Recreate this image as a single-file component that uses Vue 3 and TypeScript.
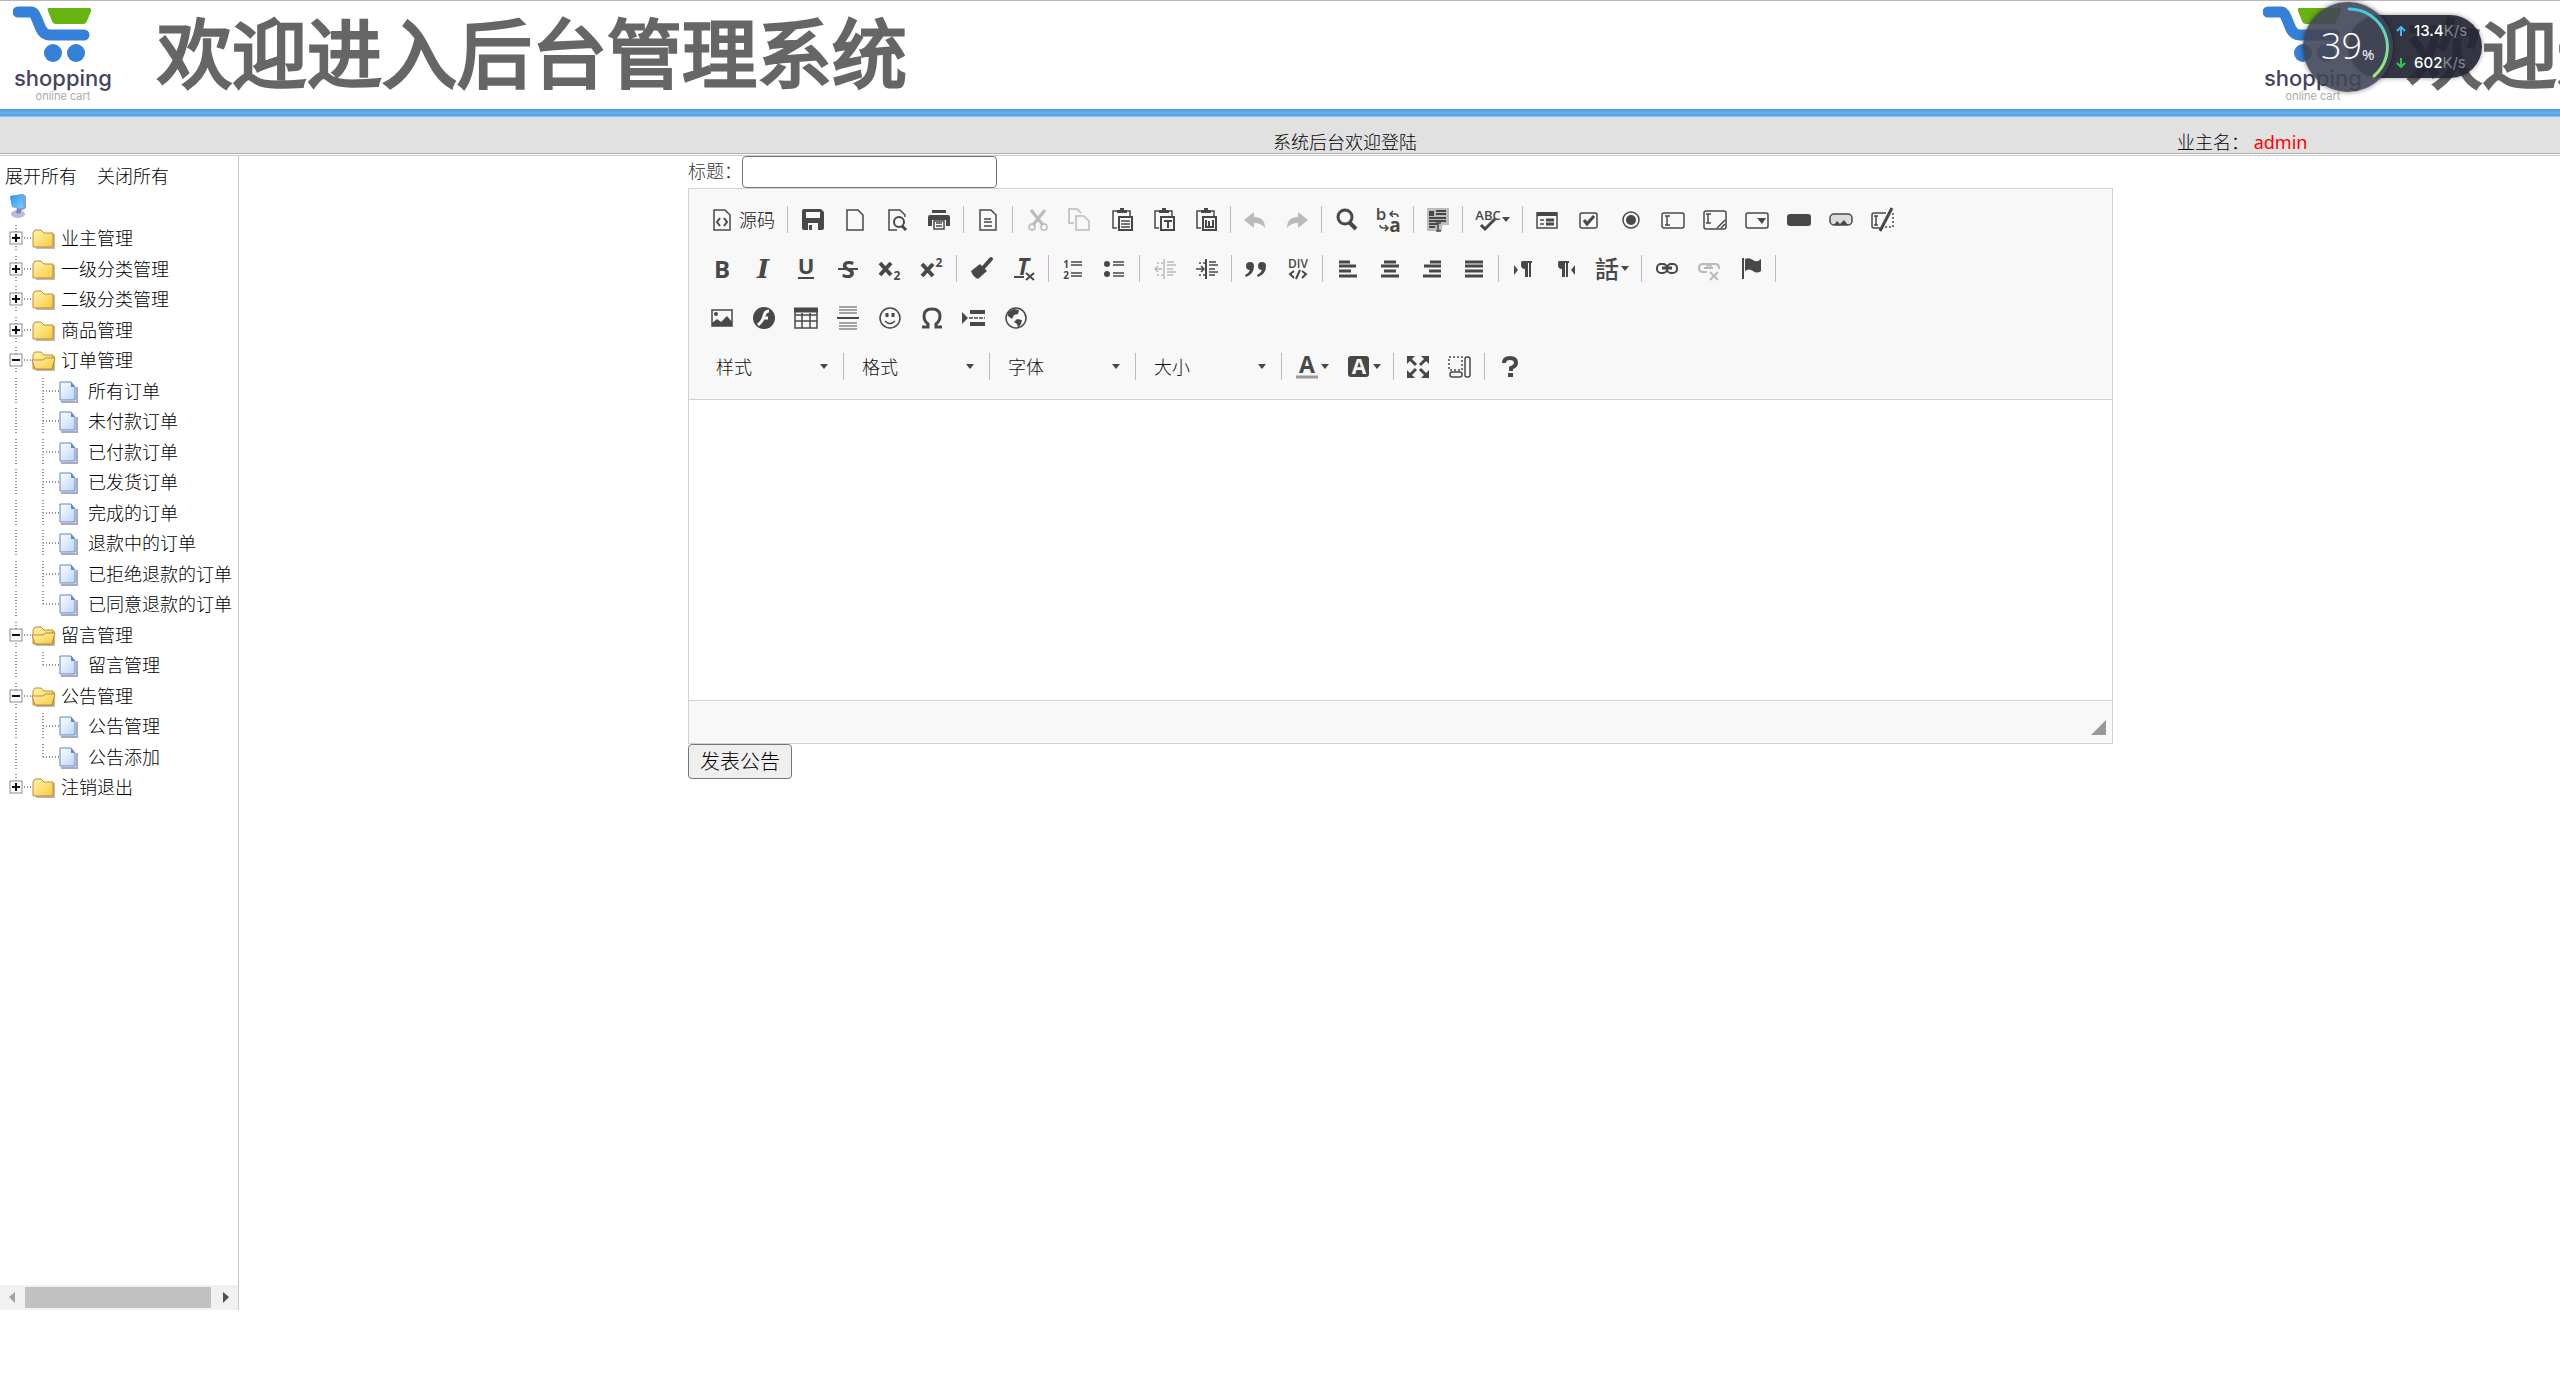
<script setup lang="ts">
import { ref } from 'vue'

interface Tool { id: string; label: string; text?: string; off?: boolean; menu?: boolean }
interface Row { kind: 'closed' | 'open' | 'leaf' | 'last'; label: string }

const t = (id: string, label: string, extra: Partial<Tool> = {}): Tool => ({ id, label, ...extra })

const toolbar: Tool[][][] = [
  [
    [t('source', '源码', { text: '源码' })],
    [t('save', '保存'), t('page', '新建'), t('preview', '预览'), t('print', '打印')],
    [t('template', '模板')],
    [t('cut', '剪切', { off: true }), t('copy', '复制', { off: true }), t('paste', '粘贴'), t('pasteText', '粘贴为无格式文本'), t('pasteWord', '从 Word 粘贴')],
    [t('undo', '撤消', { off: true }), t('redo', '重做', { off: true })],
    [t('find', '查找'), t('replace', '替换')],
    [t('selectAll', '全选')],
    [t('spell', '拼写检查', { menu: true })],
    [t('form', '表单'), t('checkbox', '复选框'), t('radio', '单选按钮'), t('textfield', '单行文本'), t('textarea', '多行文本'), t('select', '列表/菜单'), t('button', '按钮'), t('imageButton', '图像按钮'), t('hidden', '隐藏域')],
  ],
  [
    [t('bold', '加粗'), t('italic', '倾斜'), t('underline', '下划线'), t('strike', '删除线'), t('sub', '下标'), t('sup', '上标')],
    [t('brush', '复制格式'), t('removeFormat', '清除格式')],
    [t('numbered', '编号列表'), t('bulleted', '项目列表')],
    [t('outdent', '减少缩进量', { off: true }), t('indent', '增加缩进量')],
    [t('quote', '块引用'), t('div', '创建 DIV 容器')],
    [t('left', '左对齐'), t('center', '居中'), t('right', '右对齐'), t('justify', '两端对齐')],
    [t('ltr', '文字方向从左到右'), t('rtl', '文字方向从右到左'), t('language', '设置语言', { menu: true })],
    [t('link', '插入链接'), t('unlink', '取消链接', { off: true }), t('anchor', '插入锚点')],
  ],
  [
    [t('image', '图像'), t('flash', 'Flash'), t('table', '表格'), t('rule', '水平线'), t('smiley', '表情符'), t('omega', '特殊符号'), t('pageBreak', '分页符'), t('globe', 'IFrame')],
  ],
]

const combos = ['样式', '格式', '字体', '大小']
const lastGroups: Tool[][] = [
  [t('textColor', '文本颜色', { menu: true }), t('bgColor', '背景颜色', { menu: true })],
  [t('maximize', '全屏'), t('blocks', '显示区块')],
  [t('help', '关于')],
]

const doc = '<path d="M4 2H15L20 7V22H4Z"/>'
const clip = '<path d="M7 3H3V20H7M17 3h3v5"/><path d="M7 2h10v3H7zM10 0h4v3h-4z" fill="currentColor" stroke="none"/><path d="M9 9h13v13H9z" stroke-width="2"/>'
const txt = (x: number, y: number, size: number, s: string, more = '') =>
  `<text x="${x}" y="${y}" font-size="${size}" text-anchor="middle" font-family="Open Sans, sans-serif" font-weight="700" fill="currentColor" stroke="none" ${more}>${s}</text>`
const solid = (d: string) => `<path d="${d}" fill="currentColor" stroke="none"/>`

const icons: Record<string, string> = {
  source: doc + '<path d="M10 10l-3 4 3 4M14 10l3 4-3 4" stroke-width="2"/>',
  save: solid('M3 1H20L23 4V20Q23 22 21 22H3Q1 22 1 20V3Q1 1 3 1ZM5 4V10H19V4ZM7 15V22H17V15Z').replace('<path', '<path fill-rule="evenodd"') + solid('M8 17h3v5H8z'),
  page: doc,
  preview: '<path d="M12 22H4V2H15L20 7V9"/><circle cx="14" cy="14" r="5" stroke-width="2"/><path d="M17 18l4 4" stroke-width="3"/>',
  print: solid('M5 2h14v3H5zM3 7h18q2 0 2 2v9h-4v-6H5v6H1V9q0-2 2-2z') + '<path d="M7 13h10v8H7zM9 15h6M9 18h6"/>',
  template: doc + '<path d="M8 11h7M8 14h8M8 18h8"/>',
  cut: '<path d="M5 2L17 17M19 2L7 17" stroke-width="3"/><circle cx="6" cy="19" r="3"/><circle cx="18" cy="19" r="3"/>',
  copy: '<path d="M6 15H1V1H9L13 5"/><path d="M8 8H16L21 13V22H8Z"/>',
  paste: clip + '<path d="M11 13h9M11 16h9M11 19h9"/>',
  pasteText: clip + '<path d="M12 13h8M16 13v7" stroke-width="2"/>',
  pasteWord: clip + '<path d="M12 12v7h7v-7M15 13v6" stroke-width="2"/>',
  undo: solid('M1 12L11 4V9Q22 9 22 20Q18 15 11 15V20Z'),
  redo: solid('M23 12L13 4V9Q2 9 2 20Q6 15 13 15V20Z'),
  find: '<circle cx="10" cy="9" r="7" stroke-width="3"/><path d="M14 14l7 7" stroke-width="4"/>',
  replace: txt(4, 12, 17, 'b', 'style="font-weight:600"') + txt(18, 24, 19, 'a') + '<path d="M13 6h5q3 0 3 3M16 3l-3 3 3 3M3 17q0 3 3 3h4M8 17l3 3-3 3"/>',
  selectAll: '<path d="M1 0h22v17h-7v6H1z" fill="#bcbcbc" stroke="none"/><path d="M10 3h10M10 6h10M3 10h17M3 13h17M3 16h8M3 19h6" stroke-width="2"/>' + solid('M3 3h5v5H3z') + '<path d="M10 15h5M12 15v8M10 23h5"/>',
  spell: txt(12, 12, 13, 'ABC', 'style="font-weight:600"') + '<path d="M5 17l4 4L19 11" stroke-width="3"/>',
  form: '<path d="M2 5h20v15H2z"/><path d="M2 6h20" stroke-width="4"/><path d="M5 12h4M5 16h4"/><path d="M11 12h8M11 16h8" stroke-width="3"/>',
  checkbox: '<rect x="3" y="5" width="17" height="15" rx="2"/><path d="M7 12l3 4 7-8" stroke-width="3"/>',
  radio: '<circle cx="12" cy="12" r="8"/><circle cx="12" cy="12" r="5" fill="currentColor" stroke="none"/>',
  textfield: '<rect x="1" y="5" width="22" height="15" rx="2"/><path d="M4 8h5M6 8v9M4 17h5"/>',
  textarea: '<rect x="1" y="3" width="22" height="18" rx="2"/><path d="M3 6h5M5 6v9M3 15h5M14 20l8-8M18 20l4-4"/>',
  select: '<rect x="1" y="5" width="22" height="15" rx="2"/>' + solid('M12 10h9l-4 6z'),
  button: '<rect x="0" y="6" width="24" height="12" rx="3" fill="currentColor" stroke="none"/>',
  imageButton: '<rect x="1" y="6" width="22" height="11" rx="4" fill="#dcdcdc"/>' + solid('M5 17l3-4 3 3 4-4 4 5z'),
  hidden: '<path d="M12 20H3Q1 20 1 18V7Q1 5 3 5H15M3 8h4M5 8v9M3 17h4"/><path d="M9 23L21 0" stroke-width="3"/><path d="M22 5v14H14" stroke-dasharray="2 2"/>',
  bold: txt(12, 21, 24, 'B'),
  italic: '<text x="11" y="21" font-size="26" text-anchor="middle" font-family="DejaVu Serif" font-style="italic" font-weight="700" fill="currentColor" stroke="none">I</text>',
  underline: txt(12, 17, 22, 'U') + '<path d="M4 21h16" stroke-width="2"/>',
  strike: txt(12, 21, 24, 'S') + '<path d="M2 12h20" stroke-width="2"/>',
  sub: '<path d="M2 6l11 12M13 6L2 18" stroke-width="4"/>' + txt(19, 23, 12, '2'),
  sup: '<path d="M2 7l11 12M13 7L2 19" stroke-width="4"/>' + txt(19, 10, 12, '2'),
  brush: solid('M1 14l9-7 7 7-9 8q-5-2-7-8z') + '<path d="M13 11L21 2" stroke-width="4" stroke-linecap="round"/>',
  removeFormat: txt(11, 18, 23, 'T', 'font-style="italic"') + '<path d="M2 20h10" stroke-width="2"/><path d="M14 16l8 7M22 16l-8 7" stroke-width="2"/>',
  numbered: txt(5, 11, 10, '1') + txt(5, 22, 10, '2') + '<path d="M10 5h11M10 8h11M10 16h11M10 19h11"/>',
  bulleted: '<circle cx="4" cy="7" r="3" fill="currentColor" stroke="none"/><circle cx="4" cy="17" r="3" fill="currentColor" stroke="none"/><path d="M10 5h11M10 8h11M10 16h11M10 19h11"/>',
  outdent: '<path d="M11 2v20M14 5h7M14 8h9M14 12h6M14 15h9M14 18h6M2 12h7M5 9l-3 3 3 3"/><path d="M4 6h6M4 18h6" stroke-dasharray="2 2"/>',
  indent: '<path d="M11 2v20" stroke-width="2"/><path d="M14 5h7M14 8h9M14 12h6M14 15h9M14 18h6M1 12h7M6 9l3 3-3 3"/><path d="M4 6h6M4 18h6" stroke-dasharray="2 2"/>',
  quote: solid('M6 5a4 4 0 0 1 4 4q0 8-8 11l-1-2q4-2 5-5a4 4 0 0 1 0-8zM18 5a4 4 0 0 1 4 4q0 8-8 11l-1-2q4-2 5-5a4 4 0 0 1 0-8z'),
  div: txt(12, 11, 12, 'DIV', 'style="font-weight:600"') + '<path d="M8 14l-4 3 4 4M16 14l4 3-4 4M14 13l-4 9" stroke-width="2"/>',
  left: '<path d="M3 5h11M3 9h17M3 14h12M3 19h18" stroke-width="3"/>',
  center: '<path d="M6 5h12M3 9h18M6 14h12M3 19h18" stroke-width="3"/>',
  right: '<path d="M10 5h11M4 9h17M9 14h12M3 19h18" stroke-width="3"/>',
  justify: '<path d="M3 5h18M3 9h18M3 14h18M3 19h18" stroke-width="3"/>',
  ltr: solid('M3 8l4 5-4 5zM11 4h10v2h-1v14h-2V6h-1v14h-3v-8q-4 0-4-4t1-4z'),
  rtl: solid('M22 8l-4 5 4 5zM6 4h10v2h-1v14h-2V6h-1v14H9v-8q-4 0-4-4t1-4z'),
  language: '<text x="12" y="21" font-size="24" text-anchor="middle" font-family="Noto Sans CJK TC, sans-serif" font-weight="500" fill="currentColor" stroke="none">話</text>',
  link: '<rect x="2" y="7" width="10" height="9" rx="4" stroke-width="2"/><rect x="12" y="7" width="10" height="9" rx="4" stroke-width="2"/><path d="M7 11h10" stroke-width="3"/>',
  unlink: '<path d="M10 15H6Q2 15 2 11T6 7H10Q14 7 14 11M10 11Q10 7 14 7H18Q22 7 22 11V12M7 11h9" stroke-width="2"/><path d="M13 15l8 8M21 15l-8 8" stroke-width="2"/>',
  anchor: '<path d="M4 1v21" stroke-width="2"/>' + solid('M6 2Q10 0 14 3T22 2V14Q18 17 14 14T6 14Z'),
  image: '<path d="M2 4h20v16H2z"/><circle cx="6" cy="8" r="2" fill="currentColor" stroke="none"/>' + solid('M2 20v-3l5-4 4 3 6-6 5 6v4z'),
  flash: '<circle cx="12" cy="12" r="11" fill="currentColor" stroke="none"/><path d="M17 5q-4 0-5 5t-6 9M11 12h5" stroke="#f8f8f8" stroke-width="3"/>',
  table: '<path d="M1 3h22v19H1zM1 9h22M1 15h22M8 7v15M16 7v15"/><path d="M0 4h24" stroke-width="5"/>',
  rule: '<path d="M3 1h18M3 4h18M3 7h18M3 17h18M3 20h18M3 23h18" stroke="#888"/><path d="M1 12h22" stroke-width="2"/>',
  smiley: '<circle cx="12" cy="12" r="10"/><path d="M9 7v4M15 7v4" stroke-width="3"/><path d="M7 15q5 5 10 0"/>',
  omega: '<path d="M2 21h6v-3Q4 15 4 10Q4 3 12 3T20 10Q20 15 16 18v3h6" stroke-width="3"/>',
  pageBreak: solid('M0 6l6 6-6 6z') + '<path d="M8 6h15M8 18h15" stroke-width="4"/><path d="M7 12h16" stroke-dasharray="4 1"/>',
  globe: '<circle cx="12" cy="12" r="10"/>' + solid('M4 6l6-3 5 1-1 4-4 1-2 4-4-3zM13 13l5 1-1 4-3 4-1-4-3-2z'),
  textColor: txt(12, 18, 23, 'A') + '<path d="M1 22h22" stroke="#999" stroke-width="3"/>',
  bgColor: '<rect x="1" y="1" width="21" height="21" rx="3" fill="currentColor" stroke="none"/>' + txt(12, 19, 21, 'A').replace('fill="currentColor"', 'fill="#f8f8f8"'),
  maximize: '<path d="M3 3l7 7M21 3l-7 7M3 21l7-7M21 21l-7-7" stroke-width="3"/>' + solid('M1 1h8l-8 8zM23 1h-8l8 8zM1 23h8l-8-8zM23 23h-8l8-8z'),
  blocks: '<path d="M1 2h13v13H1z" stroke-dasharray="2 2"/><rect x="2" y="17" width="12" height="5" rx="2"/><rect x="17" y="2" width="5" height="20" rx="2"/>',
  help: '<path d="M6 8Q6 3 12 3T18 8Q18 11 13 13V16" stroke-width="4"/>' + solid('M10 18h5v4h-5z'),
}

const rows: Row[] = [
  { kind: 'closed', label: '业主管理' },
  { kind: 'closed', label: '一级分类管理' },
  { kind: 'closed', label: '二级分类管理' },
  { kind: 'closed', label: '商品管理' },
  { kind: 'open', label: '订单管理' },
  { kind: 'leaf', label: '所有订单' },
  { kind: 'leaf', label: '未付款订单' },
  { kind: 'leaf', label: '已付款订单' },
  { kind: 'leaf', label: '已发货订单' },
  { kind: 'leaf', label: '完成的订单' },
  { kind: 'leaf', label: '退款中的订单' },
  { kind: 'leaf', label: '已拒绝退款的订单' },
  { kind: 'last', label: '已同意退款的订单' },
  { kind: 'open', label: '留言管理' },
  { kind: 'last', label: '留言管理' },
  { kind: 'open', label: '公告管理' },
  { kind: 'leaf', label: '公告管理' },
  { kind: 'last', label: '公告添加' },
  { kind: 'closed', label: '注销退出' },
]
const isFolder = (r: Row) => r.kind === 'closed' || r.kind === 'open'

const title = ref('')
const body = ref('')
</script>

<template>
  <div class="page">
    <svg class="defs" width="0" height="0" aria-hidden="true">
      <defs>
        <linearGradient id="gold" x1="0" y1="0" x2="1" y2="1">
          <stop offset="0" stop-color="#fff6b0" /><stop offset="1" stop-color="#f7c93c" />
        </linearGradient>
        <linearGradient id="sheet" x1="0" y1="0" x2="1" y2="1">
          <stop offset="0" stop-color="#ffffff" /><stop offset="1" stop-color="#b9d4fa" />
        </linearGradient>
        <linearGradient id="screen" x1="0" y1="0" x2="1" y2="1">
          <stop offset="0" stop-color="#2f8fe8" /><stop offset="1" stop-color="#6fd0ff" />
        </linearGradient>
        <linearGradient id="arc" x1="0" y1="0" x2="0" y2="1">
          <stop offset="0" stop-color="#35cfe0" /><stop offset="1" stop-color="#a8ea6a" />
        </linearGradient>
      </defs>
    </svg>

    <header>
      <div class="banner">
        <div v-for="n in 2" :key="n" class="tile" :aria-hidden="n === 2">
          <div class="logo">
            <svg width="100" height="64" viewBox="13 1 100 64">
              <path d="M18 12H31Q34 12 36 17L41 29Q44 35 50 35H84" fill="none" stroke="#3580d8" stroke-width="11" stroke-linecap="round" stroke-linejoin="round" />
              <path d="M49 8H89Q92 8 91 11L87 21Q86 24 83 24H56Q53 24 52 21L48 11Q47 8 49 8Z" fill="#66b312" />
              <circle cx="53" cy="53" r="9" fill="#3580d8" /><circle cx="76" cy="53" r="9" fill="#3580d8" />
            </svg>
            <span class="brand">shopping</span>
            <span class="sub">online cart</span>
          </div>
          <div class="welcome">欢迎进入后台管理系统</div>
        </div>
      </div>
      <div class="stripe"></div>
      <div class="status">
        <span class="greeting">系统后台欢迎登陆</span>
        <span class="user">业主名： <b>admin</b></span>
      </div>
    </header>

    <div class="frames">
      <nav class="side">
        <div class="tree">
          <div class="all"><a href="#">展开所有</a><a href="#">关闭所有</a></div>
          <svg class="root" width="18" height="26" viewBox="0 0 18 26">
            <ellipse cx="9" cy="21" rx="7" ry="4" fill="#b9bbdc" /><path d="M8 15l5 1-2 5-4-1z" fill="#7f84bd" />
            <path d="M1 3L14 1 17 3V15L14 17 3 14Z" fill="#8e9bd0" /><path d="M1 3L14 1V15L3 14Z" fill="url(#screen)" />
          </svg>
          <div v-for="(r, i) in rows" :key="i" class="row">
            <svg v-if="isFolder(r)" width="58" height="26" viewBox="0 0 58 26">
              <path :d="i === rows.length - 1 ? 'M16 0V6' : 'M16 0V26'" class="dots" /><path d="M24 13H33" class="dots" />
              <rect x="10" y="7" width="12" height="12" fill="#fff" stroke="#8a8a8a" />
              <path :d="r.kind === 'closed' ? 'M12 13H20M16 9V17' : 'M12 13H20'" stroke="#111" stroke-width="2" />
              <path d="M36 23H54V9" fill="none" stroke="#bbb" stroke-width="2" />
              <path d="M33 8L35 5H41L44 8H53V22H33Z" fill="url(#gold)" stroke="#c08a30" stroke-linejoin="round" />
              <path v-if="r.kind === 'open'" d="M32 13H43L46 11H55L52 22H35Z" fill="url(#gold)" stroke="#c08a30" stroke-linejoin="round" />
            </svg>
            <svg v-else width="85" height="26" viewBox="0 0 85 26">
              <path d="M16 0V26" class="dots" /><path :d="r.kind === 'leaf' ? 'M43 0V26' : 'M43 0V13'" class="dots" />
              <path d="M43 13H59" class="dots" />
              <path d="M61 24H77V9" fill="none" stroke="#aab" stroke-width="2" />
              <path d="M60 4H71L75 9V22H60Z" fill="url(#sheet)" stroke="#5f82c8" /><path d="M71 4V9H75Z" fill="#5f86cf" />
            </svg>
            <a href="#">{{ r.label }}</a>
          </div>
        </div>
        <div class="scroll" aria-hidden="true">
          <svg width="25" height="25"><path d="M15 7V18L9 12Z" fill="#a3a3a3" /></svg>
          <div class="thumb"></div>
          <svg width="27" height="25"><path d="M12 7V18L18 12Z" fill="#505050" /></svg>
        </div>
      </nav>

      <main>
        <form @submit.prevent>
          <div class="field">
            <label for="title">标题：</label><input id="title" v-model="title" type="text" />
          </div>
          <div class="editor">
            <div class="tools">
              <div v-for="(line, l) in toolbar" :key="l" class="line">
                <div v-for="(group, g) in line" :key="g" class="group">
                  <button v-for="b in group" :key="b.id" type="button" :title="b.label" :aria-label="b.label" :class="{ off: b.off, menu: b.menu }">
                    <svg class="icon" viewBox="0 0 24 24" v-html="icons[b.id]"></svg>
                    <span v-if="b.text">{{ b.text }}</span>
                    <svg v-if="b.menu" class="caret" viewBox="0 0 8 5"><path d="M0 0H8L4 5Z" /></svg>
                  </button>
                  <i v-if="!(l === 0 && g === line.length - 1) && l !== 2"></i>
                </div>
              </div>
              <div class="line">
                <div class="combos">
                  <div v-for="c in combos" :key="c" class="combo">
                    <select :aria-label="c"><option>{{ c }}</option></select>
                    <svg class="caret" viewBox="0 0 8 5"><path d="M0 0H8L4 5Z" /></svg>
                    <i></i>
                  </div>
                </div>
                <div v-for="(group, g) in lastGroups" :key="g" class="group">
                  <button v-for="b in group" :key="b.id" type="button" :title="b.label" :aria-label="b.label" :class="{ menu: b.menu }">
                    <svg class="icon" viewBox="0 0 24 24" v-html="icons[b.id]"></svg>
                    <svg v-if="b.menu" class="caret" viewBox="0 0 8 5"><path d="M0 0H8L4 5Z" /></svg>
                  </button>
                  <i v-if="g < 2"></i>
                </div>
              </div>
            </div>
            <textarea v-model="body" aria-label="公告内容"></textarea>
            <div class="foot"><svg width="15" height="15"><path d="M15 0V15H0Z" fill="#999" /></svg></div>
          </div>
          <button class="submit" type="submit">发表公告</button>
        </form>
      </main>
    </div>

    <aside class="meter">
      <div class="rates">
        <div><svg width="10" height="10" viewBox="0 0 10 10"><path d="M5 10V2M1 5L5 1 9 5" stroke="#4db4f5" /></svg><b>13.4</b><span>K/s</span></div>
        <div><svg width="10" height="10" viewBox="0 0 10 10"><path d="M5 0V8M1 5L5 9 9 5" stroke="#2fc552" /></svg><b>602</b><span>K/s</span></div>
      </div>
      <div class="dial">
        <svg class="ring" viewBox="0 0 90 90"><path d="M46 7A38 38 0 0 1 71 74" /></svg>
        <span class="num">39</span><span class="pct">%</span>
      </div>
    </aside>
  </div>
</template>

<style>
body { margin: 0; }
</style>

<style scoped>
.page {
  box-sizing: border-box; height: 100vh; min-height: 900px; padding-bottom: 64px; position: relative;
  display: flex; flex-direction: column; overflow: hidden; background: #fff; color: #000;
  font: 300 18px/24px "Noto Sans", "Noto Sans CJK SC", sans-serif;
}
.defs { position: absolute; }
a { color: inherit; text-decoration: none; }
header { border-top: 1px solid #b8b8b8; border-bottom: 1px solid #b0b0b0; }
.banner { display: flex; height: 108px; overflow: hidden; }
.tile { flex: 0 0 2250px; display: flex; align-items: flex-start; }
.logo { width: 100px; padding: 0 44px 0 13px; display: flex; flex-direction: column; align-items: center; }
.brand { font: 500 22px/26px Inter, sans-serif; color: #45435e; }
.sub { font: 400 11px/10px Inter, sans-serif; color: #aaa; }
.welcome {
  font: 400 75px/98px "Noto Sans CJK SC", sans-serif; color: #666; white-space: nowrap;
  -webkit-text-stroke: 3px #666; stroke-linejoin: round;
}
.stripe { height: 8px; background: linear-gradient(#489ae2, #70b0ea 50%, #4ba3ee 80%, #a6cdf0); }
.status {
  display: grid; grid-template-columns: 1273fr 904fr 383fr; height: 36px; background: #e1e1e1;
  align-items: end; line-height: 22px;
}
.greeting { grid-column: 2; }
.user b { font-weight: 400; color: #f00; }
.frames { flex: 1; display: flex; margin-top: 1px; border-top: 1px solid #ccc; }
.side { flex: none; width: 238px; border-right: 1px solid #c8c8c8; display: flex; flex-direction: column; }
.tree { flex: 1; padding-top: 8px; }
.all { display: flex; gap: 20px; padding-left: 5px; }
.root { display: block; margin: 5px 0 4px 9px; }
.row { display: flex; align-items: center; height: 30px; white-space: nowrap; }
.row:nth-child(even) { height: 31px; }
.row svg { flex: none; margin-right: 3px; }
.dots { stroke: #999; stroke-dasharray: 1 2; fill: none; stroke-width: 2; }
.scroll { display: flex; align-items: center; height: 25px; background: #f1f1f1; }
.thumb { flex: 1; height: 21px; background: #c1c1c1; }
main { flex: 1; padding: 0 16px 0 18px; }
form { max-width: 1425px; margin: 0 auto; }
.field { display: flex; height: 32px; color: #333; }
label { line-height: 30px; }
input { box-sizing: border-box; width: 255px; border: 1px solid #767676; border-radius: 4px; font: inherit; }
.editor { border: 1px solid #d1d1d1; }
.tools { padding: 6px 12px 8px; background: #f8f8f8; border-bottom: 1px solid #d1d1d1; color: #484848; }
.line { display: flex; height: 49px; align-items: center; }
.group { display: flex; align-items: center; }
.group button {
  display: flex; align-items: center; width: 42px; height: 42px; padding: 0 9px; border: 0;
  background: none; color: inherit; font: inherit; white-space: nowrap;
}
.group button:has(span) { width: 83px; gap: 5px; }
.group button span { color: #111; }
.group button.menu { width: 52px; gap: 2px; }
.group button.off { opacity: 0.35; }
.icon { flex: none; width: 24px; height: 24px; fill: none; stroke: currentColor; stroke-width: 1.5; overflow: visible; }
.caret { flex: none; width: 8px; height: 5px; fill: currentColor; }
i { flex: none; width: 1px; height: 27px; margin: 0 3px; background: #bcbcbc; }
.group:nth-child(odd) i, .combo i { margin-right: 4px; }
.combos { display: flex; padding-left: 1px; }
.combo { display: flex; align-items: center; }
.combo select { appearance: none; width: 118px; height: 42px; padding: 0 14px; border: 0; background: none; font: inherit; color: #111; }
.combo .caret { margin-right: 12px; }
textarea { display: block; box-sizing: border-box; width: 100%; height: 300px; border: 0; resize: none; background: #fff; font: inherit; }
.foot { display: flex; justify-content: flex-end; align-items: center; height: 43px; padding-right: 6px; padding-top: 10px; box-sizing: border-box; border-top: 1px solid #d1d1d1; background: #f8f8f8; }
.submit { display: block; width: 104px; height: 35px; padding: 0; border: 1px solid #767676; border-radius: 4px; background: #efefef; color: #000; font: inherit; font-size: 20px; }
.meter { position: absolute; top: 2px; right: 78px; width: 179px; height: 90px; }
.rates {
  position: absolute; left: 45px; right: 0; top: 13px; height: 63px; box-sizing: border-box; padding-left: 48px;
  border-radius: 32px; background: rgba(36, 38, 52, 0.93); box-shadow: 0 0 5px rgba(0, 0, 0, 0.4); color: #fff;
}
.rates div { display: flex; align-items: center; height: 32px; font: 15px/20px Inter, sans-serif; }
.rates svg { fill: none; stroke-width: 2; margin-right: 8px; }
.rates b { font-weight: 500; }
.rates span { color: #85868f; }
.dial {
  position: absolute; left: 0; top: 0; width: 90px; height: 90px; box-sizing: border-box; padding: 0 0 2px 18px; border-radius: 50%;
  display: flex; align-items: center; background: rgba(66, 70, 88, 0.9); box-shadow: 0 0 5px rgba(0, 0, 0, 0.5); color: #fff;
}
.ring { position: absolute; inset: 0; fill: none; stroke: url(#arc); stroke-width: 3; stroke-linecap: round; }
.num { font: 300 36px/40px "Open Sans", sans-serif; }
.pct { font: 400 15px/16px "Open Sans", sans-serif; padding-top: 16px; }
</style>
